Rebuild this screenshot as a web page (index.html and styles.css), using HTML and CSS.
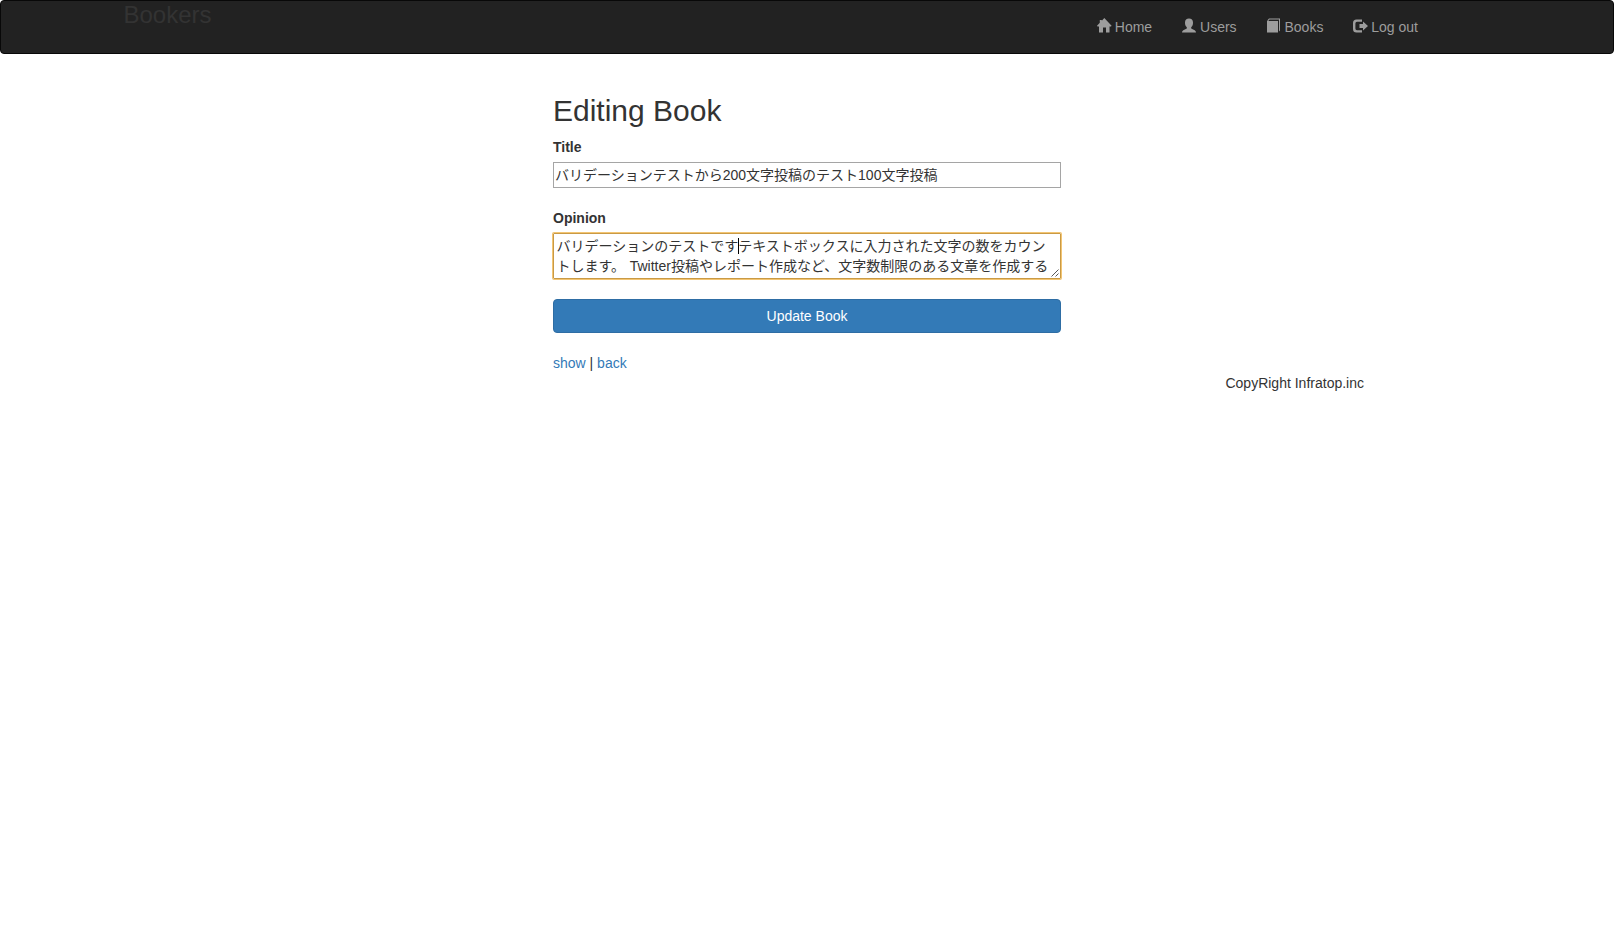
FILE: index.html
```html
<!DOCTYPE html>
<html lang="ja">
<head>
<meta charset="utf-8">
<title>Bookers</title>
<link rel="stylesheet" href="styles.css">
</head>
<body>
<header class="navbar">
  <h1 class="brand">Bookers</h1>
  <nav class="nav">
    <a class="nav-link" href="#"><svg class="icon" viewBox="0 0 14 15"><path d="M7.300 0 14.600 7.800 14 8.500H12.500V14.500H9V9.500H6V14.500H2V8.500H.5L0 7.800 2.800 4.800V2H4.800V2.700Z"/></svg>Home</a>
    <a class="nav-link" href="#"><svg class="icon" viewBox="0 0 14 15"><path d="M7 .5C9.500.5 11 2 11 4.500 11 6.600 10.600 8 9.200 9.200V10.600L12.700 12.300Q14 13 14 14.500H0Q0 13 1.300 12.300L4.800 10.600V9.200C3.400 8 3 6.600 3 4.500 3 2 4.500 .5 7 .5Z"/></svg>Users</a>
    <a class="nav-link" href="#"><svg class="icon" viewBox="0 0 14 15"><path d="M0 3H11V14.500H0ZM0 2.700 2 .5H13V12.500L12 13.500V1.600H2.500L1.600 2.700Z"/></svg>Books</a>
    <a class="nav-link" href="#"><svg class="icon" viewBox="0 0 14 15"><path d="M9 1.500V3.700H4Q2.400 3.700 2.400 5.500V10.500Q2.400 12.300 4 12.300H9V14.500H3.500Q0 14.500 0 11V5Q0 1.500 3.500 1.500ZM10 3.500 15 8 10 12.500V10H6.500V6H10Z"/></svg>Log out</a>
  </nav>
</header>
<main class="content">
  <h2 class="heading">Editing Book</h2>
  <form class="form">
    <label class="label" for="title">Title</label>
    <input class="text-input" id="title" type="text" value="バリデーションテストから200文字投稿のテスト100文字投稿">
    <div class="label label-opinion">Opinion</div>
    <div class="opinion">バリデーションのテストです<span class="caret"></span>テキストボックスに入力された文字の数をカウン<br>トします。 Twitter投稿やレポート作成など、文字数制限のある文章を作成する<svg class="grip" viewBox="0 0 8 8"><path d="M.5 7.500 7.500 .5M4.500 7.500 7.500 4.500"/></svg></div>
    <button class="submit" type="button">Update Book</button>
  </form>
  <div class="links"><a href="#">show</a> | <a href="#">back</a></div>
</main>
<footer class="footer">CopyRight Infratop.inc</footer>
</body>
</html>
```
FILE: styles.css
```css
* { box-sizing: border-box; }
body {
  margin: 0;
  background: #fff;
  color: #333;
  font: 14px/20px "Liberation Sans", "Noto Sans CJK JP", sans-serif;
}
a { color: #337ab7; text-decoration: none; }
.navbar {
  display: flex;
  justify-content: space-between;
  height: 54px;
  padding: 0 180px 0 122.5px;
  background: #222;
  border: 1px solid #080808;
  border-radius: 4px;
}
.brand { margin: 0; font-size: 24px; font-weight: 400; line-height: 28px; }
.nav { display: flex; padding-top: 1px; }
.nav-link { display: block; padding: 15px; color: #9d9d9d; white-space: nowrap; }
.icon {
  width: 14px;
  height: 15px;
  margin-right: 3.89px;
  overflow: visible;
  vertical-align: -1px;
  fill: currentColor;
}
.content { width: 508px; margin: 40px auto 0; }
.heading { margin: 0 0 10px; font-size: 30px; font-weight: 400; line-height: 33px; }
.form { display: flex; flex-direction: column; }
.label { height: 20px; margin-bottom: 5px; font-weight: 700; }
.label-opinion { margin-top: 20px; }
.text-input {
  width: 100%;
  height: 26px;
  padding: 0 1px 2px;
  border: 1px solid #a5a5a5;
  font: inherit;
  color: inherit;
  outline: none;
}
.opinion {
  position: relative;
  height: 46px;
  padding: 2px 2px 2px 2.5px;
  border: 1px solid #c99a45;
  box-shadow: 0 0 0 1px #f3c573;
  border-radius: 1px;
  white-space: nowrap;
  word-spacing: .7px;
}
.caret {
  display: inline-block;
  width: 1px;
  height: 16px;
  margin-right: -1px;
  background: #000;
  vertical-align: -3px;
}
.grip {
  position: absolute;
  right: 1px;
  bottom: 1px;
  width: 8px;
  height: 8px;
  fill: none;
  stroke: #444;
  stroke-width: .9;
}
.submit {
  height: 34px;
  margin-top: 20px;
  padding: 6px 12px;
  border: 1px solid #2e6da4;
  border-radius: 4px;
  background: #337ab7;
  color: #fff;
  font: inherit;
}
.links { margin-top: 20px; }
.footer { padding-right: 250px; text-align: right; }
```
